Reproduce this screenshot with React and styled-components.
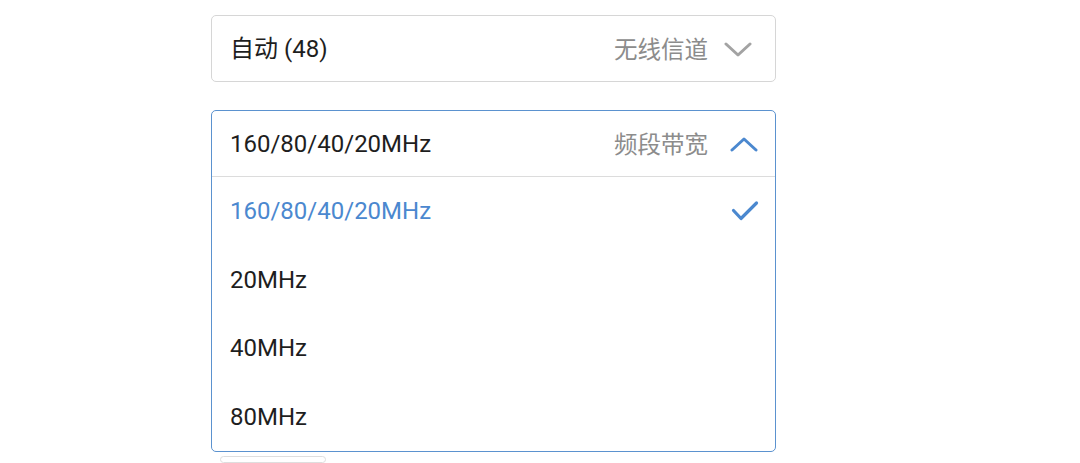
import React from "react";
import styled, { createGlobalStyle } from "styled-components";

const Global = createGlobalStyle`
  html, body { margin: 0; padding: 0; background: #ffffff; }
  body { font-family: Roboto, "Noto Sans CJK SC", sans-serif; }
`;

const Page = styled.div`
  width: 1080px;
  height: 463px;
  overflow: hidden;
  padding: 15px 0 0 211px;
  box-sizing: border-box;
  display: flex;
  flex-direction: column;
  gap: 28px;
`;

const Select = styled.div`
  width: 565px;
  box-sizing: border-box;
  border: 1.5px solid ${(p) => (p.$open ? "#5b92cf" : "#d6d6d6")};
  border-radius: 5px;
  background: #fff;
  display: flex;
  flex-direction: column;
`;

const Header = styled.div`
  height: 65px;
  display: flex;
  align-items: center;
  padding: 0 ${(p) => (p.$open ? "17px" : "23px")} 0 18px;
  border-bottom: ${(p) => (p.$open ? "1.5px solid #dcdcdc" : "none")};
`;

const Value = styled.span`
  flex: 1;
  font-family: Roboto, "Noto Sans CJK SC", sans-serif;
  font-size: 24px;
  line-height: 1;
  color: #1e1e1e;
`;

const Label = styled.span`
  font-family: "Noto Sans CJK SC", sans-serif;
  font-size: 23.5px;
  line-height: 1;
  color: #8c8c8c;
  margin-right: ${(p) => (p.$open ? "22px" : "16px")};
`;

const Option = styled.div`
  height: 68.5px;
  display: flex;
  align-items: center;
  padding: 0 16px 0 18px;
  font-family: Roboto, sans-serif;
  font-size: 24px;
  line-height: 1;
  color: ${(p) => (p.$selected ? "#4b88cf" : "#1e1e1e")};
`;

const OptionText = styled.span`
  flex: 1;
`;

const Pill = styled.div`
  width: 106px;
  height: 44px;
  margin-left: 9px;
  margin-top: -24px;
  border: 1.5px solid #dedede;
  border-radius: 22px;
  box-sizing: border-box;
`;

const Chevron = ({ up, color }) => (
  <svg width="28" height="16" viewBox="0 0 28 16">
    <path
      d={up ? "M2 14 L14 3 L26 14" : "M2 3 L14 14 L26 3"}
      fill="none"
      stroke={color}
      strokeWidth="3"
      strokeLinecap="round"
      strokeLinejoin="round"
    />
  </svg>
);

const Check = () => (
  <svg width="28" height="22" viewBox="0 0 28 22">
    <path
      d="M2.5 10.5 L10 18.5 L25.5 3"
      fill="none"
      stroke="#4b88cf"
      strokeWidth="3.2"
      strokeLinecap="round"
      strokeLinejoin="round"
    />
  </svg>
);

const options = ["160/80/40/20MHz", "20MHz", "40MHz", "80MHz"];

export default function App() {
  return (
    <>
      <Global />
      <Page>
        <Select>
          <Header>
            <Value>自动 (48)</Value>
            <Label>无线信道</Label>
            <Chevron color="#a3a3a3" />
          </Header>
        </Select>
        <Select $open>
          <Header $open>
            <Value>160/80/40/20MHz</Value>
            <Label $open>频段带宽</Label>
            <Chevron up color="#4b88cf" />
          </Header>
          {options.map((o, i) => (
            <Option key={o} $selected={i === 0}>
              <OptionText>{o}</OptionText>
              {i === 0 && <Check />}
            </Option>
          ))}
        </Select>
        <Pill />
      </Page>
    </>
  );
}
